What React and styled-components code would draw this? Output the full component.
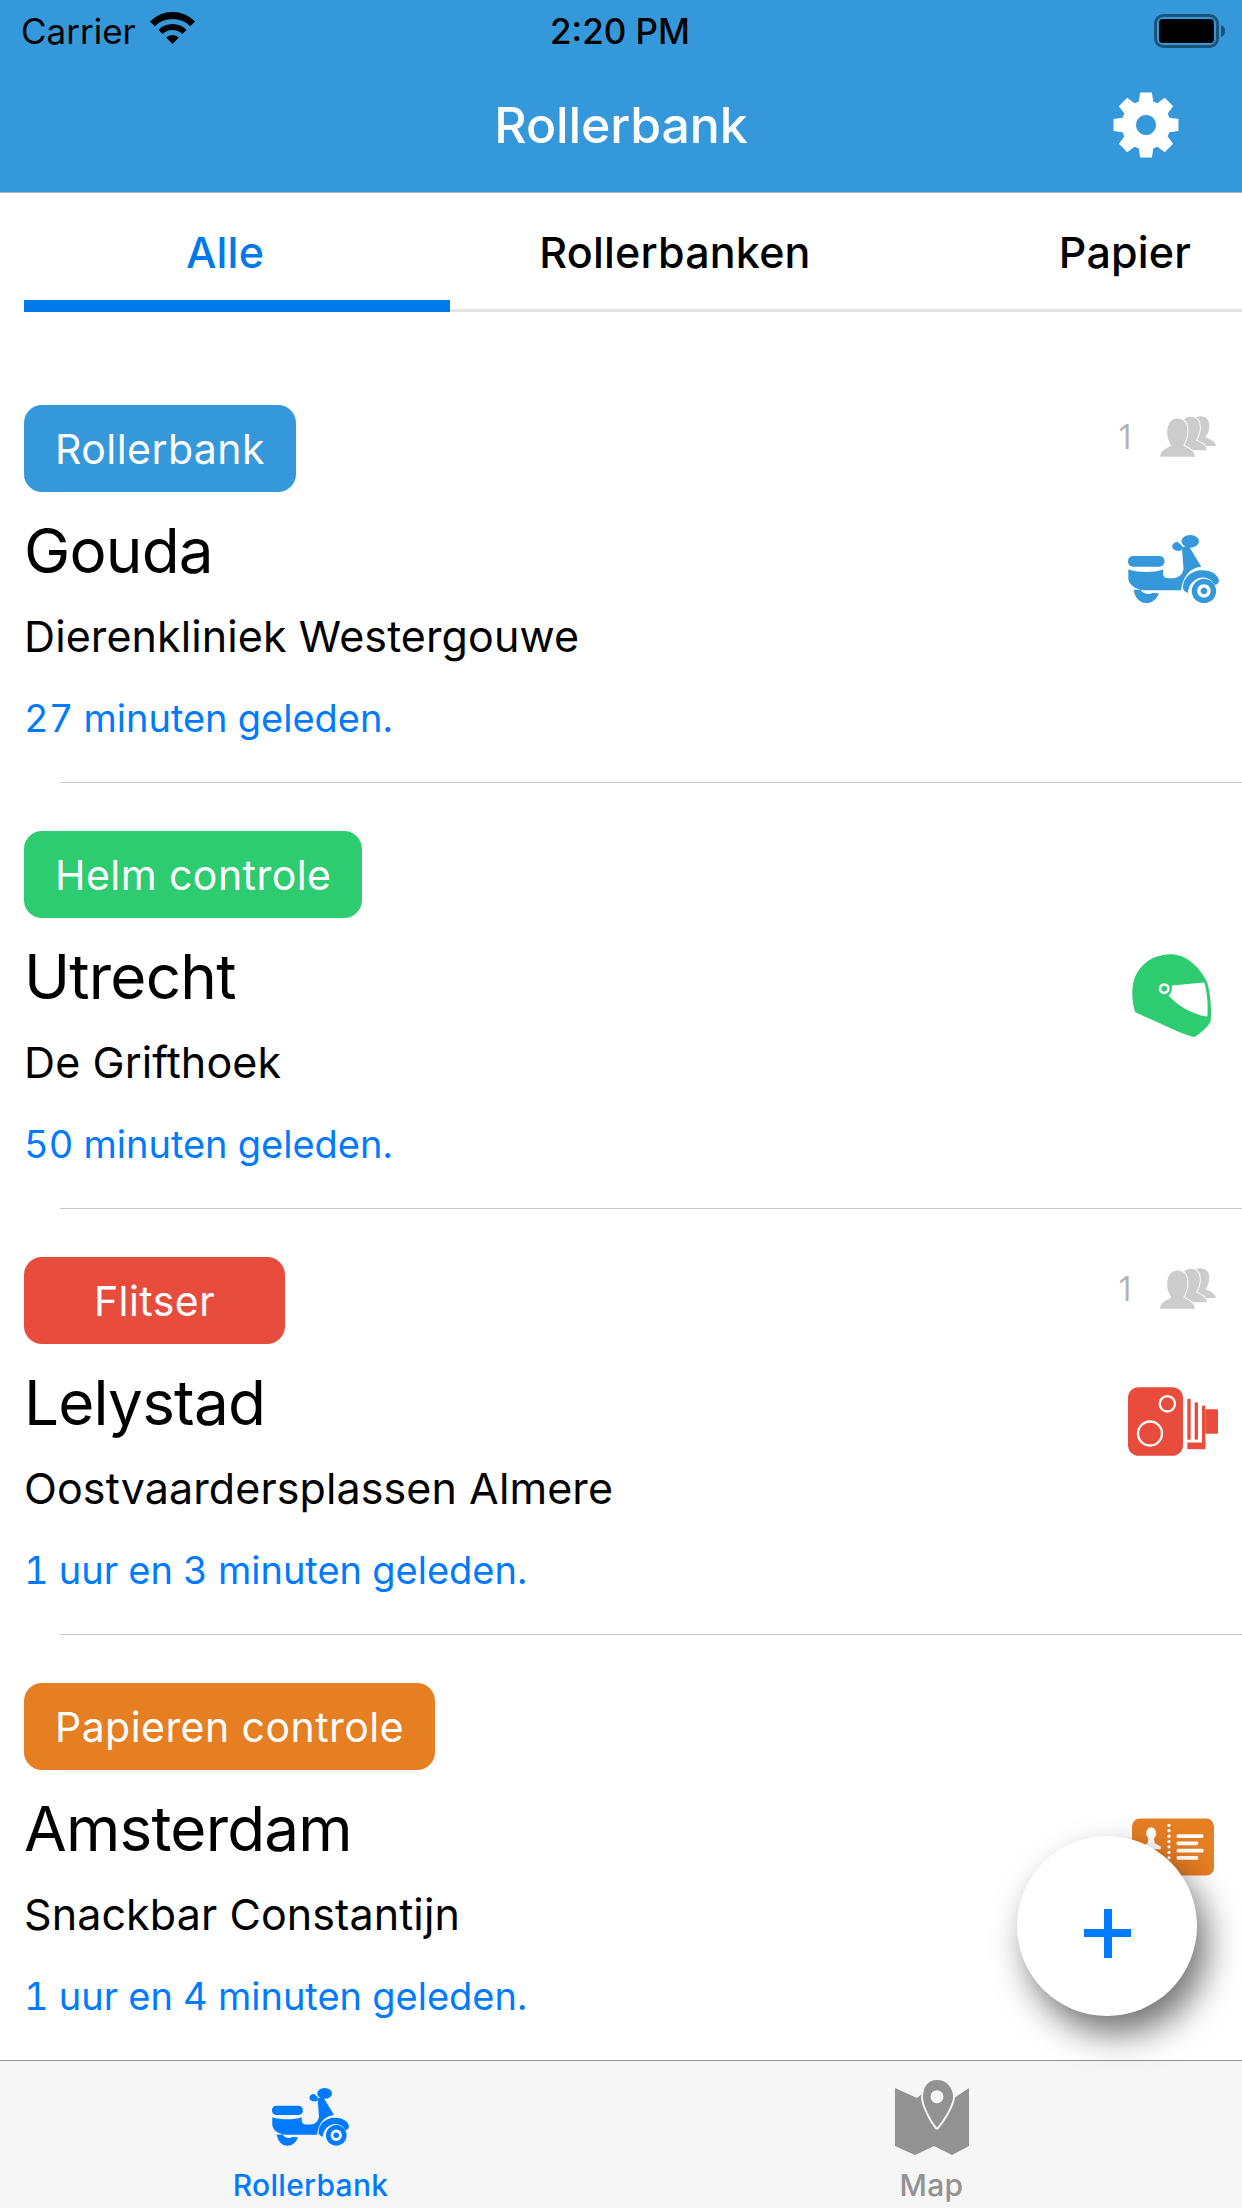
import React from 'react';
import styled, { createGlobalStyle } from 'styled-components';

const Global = createGlobalStyle`
  html, body { margin: 0; padding: 0; background: #fff; }
  * { box-sizing: border-box; }
  body { font-family: Inter, "Liberation Sans", sans-serif; }
`;

const Page = styled.div`
  position: relative;
  width: 1242px;
  height: 2208px;
  overflow: hidden;
  display: flex;
  flex-direction: column;
  background: #fff;
`;

const Header = styled.header`
  height: 193px;
  flex: none;
  background: #3498db;
  border-bottom: 1px solid #b4b4b4;
  display: flex;
  flex-direction: column;
`;

const StatusBar = styled.div`
  height: 60px;
  display: flex;
  align-items: center;
  padding: 2px 16px 0 21px;
  color: #000;
  font-size: 35px;
`;

const Carrier = styled.span`
  width: 128px;
`;

const Clock = styled.span`
  flex: 1;
  text-align: center;
  font-weight: 500;
  padding-right: 110px;
`;

const NavBar = styled.div`
  flex: 1;
  display: flex;
  align-items: center;
  justify-content: center;
  position: relative;
`;

const Title = styled.h1`
  margin: 0 0 2px;
  font-size: 50px;
  font-weight: 500;
  color: #fff;
  letter-spacing: -0.1px;
`;

const GearButton = styled.div`
  position: absolute;
  left: 1113px;
  top: 32px;
  width: 66px;
  height: 66px;
  display: flex;
`;

const Tabs = styled.nav`
  height: 119px;
  flex: none;
  display: flex;
  width: 1350px;
  align-items: stretch;
`;

const Tab = styled.div`
  flex: none;
  width: ${(p) => (p.$first ? '426px' : '450px')};
  margin-left: ${(p) => (p.$first ? '24px' : '0')};
  padding-right: ${(p) => (p.$first ? '24px' : '0')};
  padding-top: ${(p) => (p.$active ? '10px' : '1px')};
  display: flex;
  align-items: center;
  justify-content: center;
  font-size: 43px;
  font-weight: 500;
  letter-spacing: 0.2px;
  color: ${(p) => (p.$active ? '#007aeb' : '#000')};
  border-bottom: ${(p) => (p.$active ? '12px solid #007aeb' : '3px solid #e4e4e4')};
`;

const List = styled.main`
  flex: 1;
  min-height: 0;
  overflow: hidden;
  padding-top: 44px;
`;

const Row = styled.article`
  position: relative;
  height: 426px;
  display: flex;
  align-items: center;
  padding: 0 24px;
`;

const Divider = styled.div`
  height: 1px;
  margin: 0 0 -1px 60px;
  background: #c8c8c8;
`;

const Main = styled.div`
  flex: 1;
  align-self: flex-start;
  padding-top: 49px;
  display: flex;
  flex-direction: column;
  align-items: flex-start;
`;

const Badge = styled.span`
  height: 87px;
  min-width: ${(p) => p.$minWidth || 0}px;
  padding: 0 31px;
  border-radius: 18px;
  background: ${(p) => p.$color};
  color: #fff;
  font-size: 41px;
  display: flex;
  align-items: center;
  justify-content: center;
  letter-spacing: 0.45px;
`;

const Name = styled.h2`
  margin: 24px 0 0;
  font-size: 62px;
  line-height: 70px;
  font-weight: 400;
  color: #000;
  letter-spacing: -0.8px;
`;

const Place = styled.p`
  margin: 25px 0 0;
  font-size: 43px;
  line-height: 50px;
  color: #000;
  letter-spacing: 0.1px;
`;

const Time = styled.p`
  margin: 35px 0 0;
  font-size: 38px;
  line-height: 44px;
  color: #007aff;
  font-feature-settings: 'tnum';
`;

const IconSlot = styled.div`
  width: 90px;
  flex: none;
  display: flex;
  justify-content: center;
`;

const Count = styled.div`
  position: absolute;
  top: 60px;
  right: 26px;
  display: flex;
  align-items: flex-start;
  gap: 24px;
  color: #b2b2b2;
  font-family: "Open Sans", sans-serif;
  font-size: 34px;
  line-height: 41px;
`;

const Fab = styled.button`
  position: absolute;
  left: 1017px;
  top: 1836px;
  width: 180px;
  height: 180px;
  border: 0;
  padding: 14px 0 0;
  border-radius: 50%;
  background: #fff;
  box-shadow: 10px 18px 34px rgba(0, 0, 0, 0.55);
  display: flex;
  align-items: center;
  justify-content: center;
`;

const BottomBar = styled.footer`
  height: 148px;
  flex: none;
  background: #f6f6f6;
  border-top: 1px solid #929292;
  display: grid;
  grid-template-columns: 1fr 1fr;
`;

const BarItem = styled.div`
  display: flex;
  flex-direction: column;
  align-items: center;
  justify-content: flex-end;
  padding-bottom: 5px;
  color: ${(p) => (p.$active ? '#007aff' : '#929292')};
  font-size: 30px;
  font-weight: 500;
  letter-spacing: 0.3px;
  line-height: 36px;
`;

const BarIcon = styled.div`
  height: 88px;
  padding-top: ${(p) => p.$top || 0}px;
  display: flex;
  align-items: flex-start;
`;

const Glyph = styled.svg`
  display: block;
  flex: none;
  margin-right: ${(p) => p.$nudge || 0}px;
`;

const WifiGlyph = styled.svg`
  display: block;
  flex: none;
  margin-top: -6px;
`;

const Wifi = () => (
  <WifiGlyph width="47" height="32" viewBox="0 0 47 32">
    <path d="M.9 9.4A32 32 0 0 1 46.1 9.4L41.2 14.3A25 25 0 0 0 5.8 14.3Z" />
    <path d="M9.4 17.9A20 20 0 0 1 37.6 17.9L33.4 22.1A14 14 0 0 0 13.6 22.1Z" />
    <path d="M23.5 32L17.1 25.6A9 9 0 0 1 29.9 25.6Z" />
  </WifiGlyph>
);

const Battery = () => (
  <Glyph width="72" height="34" viewBox="0 0 72 34">
    <rect x="1.5" y="1.5" width="62" height="31" rx="8" fill="none" stroke="#000" strokeOpacity=".45" strokeWidth="3" />
    <rect x="5" y="5" width="55" height="24" rx="4" fill="#000" />
    <path d="M67 11C70 12 71 14 71 17S70 22 67 23Z" fill="#000" fillOpacity=".45" />
  </Glyph>
);

const gearPath = (() => {
  const pts = [];
  const teeth = 8;
  const outer = 33;
  const root = 24.5;
  for (let i = 0; i < teeth; i += 1) {
    const a = (i / teeth) * Math.PI * 2 - Math.PI / 2;
    const at = (r, d) => `${(33 + r * Math.cos(a + d)).toFixed(2)} ${(33 + r * Math.sin(a + d)).toFixed(2)}`;
    pts.push(at(root, -0.3), at(outer, -0.18), at(outer, 0.18), at(root, 0.3));
  }
  return `M${pts.join('L')}ZM33 23a10 10 0 1 0 .01 0Z`;
})();

const Gear = () => (
  <Glyph width="66" height="66" viewBox="0 0 66 66">
    <path d={gearPath} fill="#fff" fillRule="evenodd" />
  </Glyph>
);

const Scooter = ({ color, width = 91 }) => (
  <Glyph width={width} viewBox="143 403 272 204" fill={color}>
    <rect x="143" y="466" width="109" height="32" rx="15" />
    <path d="M144 506C175 516 220 516 248 506L248 520Q250 532 262 532L280 532Q304 530 309 505L304 438L326 438L362 498C335 500 308 520 302 568L190 568C165 566 146 552 144 534Z" />
    <ellipse cx="329" cy="422" rx="26" ry="19" />
    <path d="M275 437C276 428 284 423 292 424L305 436L303 449C288 452 276 447 275 437Z" />
    <path d="M308 565C304 532 332 508 365 508C390 508 412 520 415 538C414 548 408 552 402 552C395 540 385 531 368 530C345 530 324 548 322 576C316 574 311 570 308 565Z" />
    <path fillRule="evenodd" d="M370 534a36.5 36.5 0 1 0 .01 0ZM370 550a20 20 0 1 1-.01 0Zm0 10a10 10 0 1 0 .01 0Z" />
    <path d="M160 567L182 567C184 580 210 582 214 576L235 577C228 598 212 607 197 607C178 607 163 590 160 567Z" />
  </Glyph>
);

const Bust = ({ transform }) => (
  <path
    transform={transform}
    d="M240 170C242 150 260 144 274 136C266 124 260 110 262 88C264 66 278 55 292 55C308 55 322 66 322 88C324 110 316 124 310 136C324 144 343 150 345 170Z"
  />
);

const People = () => (
  <Glyph width="56" height="41" viewBox="240 48 168 122" fill="#cccccc" stroke="#fff" strokeWidth="6" paintOrder="stroke">
    <Bust transform="translate(104 5) scale(.88 .78)" />
    <Bust transform="translate(63 2) scale(.92 .87)" />
    <Bust />
  </Glyph>
);

const Helmet = () => (
  <Glyph $nudge={3} width="79" height="83" viewBox="95 103 238 249">
    <path fill="#2ecc71" d="M105 278C92 240 92 190 110 160C135 115 180 103 215 103C265 105 305 150 322 190C332 225 335 270 332 305C325 320 305 338 285 352C270 352 240 340 105 278Z" />
    <path fill="#fff" d="M215 197L313 188C322 220 325 260 322 291C280 285 235 260 205 228C213 220 217 210 215 197Z" />
    <circle cx="192" cy="207" r="12.5" fill="#2ecc71" stroke="#fff" strokeWidth="8" />
  </Glyph>
);

const Camera = () => (
  <Glyph width="90" height="69" viewBox="115 412 270 206" fill="#e74c3c">
    <rect x="115" y="412" width="165" height="206" rx="32" />
    <circle cx="233" cy="462" r="23" fill="none" stroke="#fff" strokeWidth="7" />
    <circle cx="181" cy="551" r="36" fill="none" stroke="#fff" strokeWidth="7" />
    <rect x="293" y="447" width="10" height="123" rx="3" />
    <rect x="315" y="457" width="10" height="113" rx="3" />
    <rect x="337" y="467" width="10" height="131" rx="3" />
    <rect x="293" y="578" width="54" height="20" />
    <rect x="347" y="478" width="38" height="74" rx="3" />
  </Glyph>
);

const Card = () => (
  <Glyph width="82" height="58" viewBox="395 57 248 173">
    <rect x="395" y="57" width="248" height="173" rx="24" fill="#e67e22" />
    <g fill="#fff">
      <ellipse cx="453" cy="102" rx="15" ry="18" />
      <path d="M445 115H461L464 132L482 142V150H428V142L442 132Z" />
      {[78, 94, 111, 127, 143, 160, 176].map((y) => (
        <circle key={y} cx="507" cy={y} r="5" />
      ))}
      <rect x="530" y="105" width="81" height="11" rx="4" />
      <rect x="530" y="127" width="65" height="11" rx="4" />
      <rect x="530" y="149" width="81" height="11" rx="4" />
      <rect x="530" y="171" width="65" height="11" rx="4" />
    </g>
  </Glyph>
);

const MapIcon = () => (
  <Glyph width="76" height="77" viewBox="0 0 76 77">
    <path fill="#929292" d="M1 9L23 19L28 15H59L60 19L75 9V67L58 76L40 67L21 76L1 67Z" />
    <path fill="#929292" stroke="#f6f6f6" strokeWidth="2" d="M43 0C53 0 60 8 60 18C60 26 50 42 44 49Q43 50 42 49C36 42 28 26 28 18C28 8 33 0 43 0Z" />
    <circle cx="43" cy="17.7" r="6.5" fill="#f6f6f6" />
  </Glyph>
);

const rows = [
  { badge: 'Rollerbank', color: '#3498db', name: 'Gouda', place: 'Dierenkliniek Westergouwe', time: '27 minuten geleden.', count: 1, icon: <Scooter color="#3498db" /> },
  { badge: 'Helm controle', color: '#2ecc71', name: 'Utrecht', place: 'De Grifthoek', time: '50 minuten geleden.', icon: <Helmet /> },
  { badge: 'Flitser', color: '#e74c3c', name: 'Lelystad', place: 'Oostvaardersplassen Almere', time: '1 uur en 3 minuten geleden.', count: 1, minWidth: 261, icon: <Camera /> },
  { badge: 'Papieren controle', color: '#e67e22', name: 'Amsterdam', place: 'Snackbar Constantijn', time: '1 uur en 4 minuten geleden.', icon: <Card /> },
];

export default function App() {
  return (
    <Page>
      <Global />
      <Header>
        <StatusBar>
          <Carrier>Carrier</Carrier>
          <Wifi />
          <Clock>2:20 PM</Clock>
          <Battery />
        </StatusBar>
        <NavBar>
          <Title>Rollerbank</Title>
          <GearButton><Gear /></GearButton>
        </NavBar>
      </Header>
      <Tabs>
        <Tab $first $active>Alle</Tab>
        <Tab>Rollerbanken</Tab>
        <Tab>Papier</Tab>
      </Tabs>
      <List>
        {rows.map((r) => (
          <React.Fragment key={r.name}>
            <Row>
              <Main>
                <Badge $color={r.color} $minWidth={r.minWidth}>{r.badge}</Badge>
                <Name>{r.name}</Name>
                <Place>{r.place}</Place>
                <Time>{r.time}</Time>
              </Main>
              <IconSlot>{r.icon}</IconSlot>
              {r.count && (
                <Count>
                  <span>{r.count}</span>
                  <People />
                </Count>
              )}
            </Row>
            <Divider />
          </React.Fragment>
        ))}
      </List>
      <BottomBar>
        <BarItem $active>
          <BarIcon $top={9}><Scooter color="#007aff" width={77} /></BarIcon>
          Rollerbank
        </BarItem>
        <BarItem>
          <BarIcon><MapIcon /></BarIcon>
          Map
        </BarItem>
      </BottomBar>
      <Fab aria-label="Toevoegen">
        <svg width="47" height="49" viewBox="0 0 47 49" fill="#007aff">
          <rect x="0" y="20" width="47" height="8" />
          <rect x="20" y="0" width="8" height="49" />
        </svg>
      </Fab>
    </Page>
  );
}
